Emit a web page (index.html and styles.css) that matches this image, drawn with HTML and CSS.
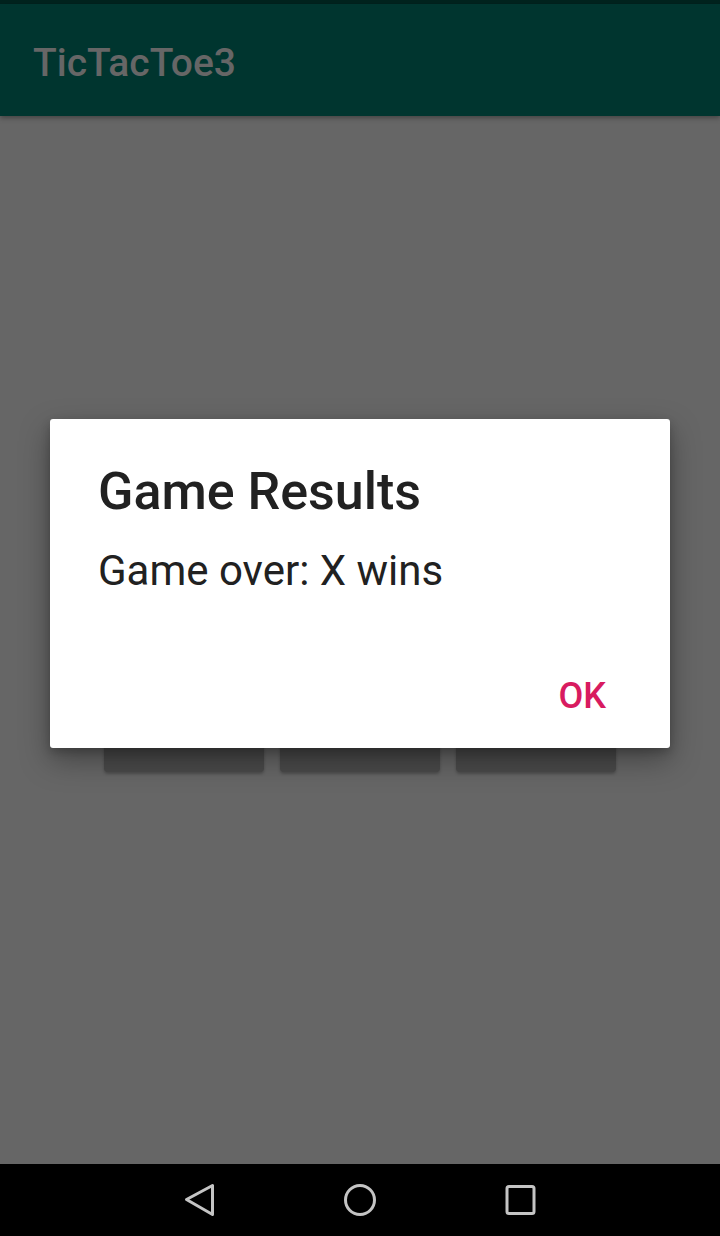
FILE: index.html
```html
<!DOCTYPE html>
<html>
<head>
<meta charset="utf-8">
<link rel="stylesheet" href="styles.css">
</head>
<body>
<div class="screen">
  <div class="statusbar"></div>
  <header class="appbar"><span class="app-title">TicTacToe3</span></header>
  <main class="content">
    <div class="board">
      <div class="cell"></div><div class="cell"></div><div class="cell"></div>
      <div class="cell"></div><div class="cell"></div><div class="cell"></div>
      <div class="cell"></div><div class="cell"></div><div class="cell"></div>
    </div>
    <div class="dialog">
      <h1 class="dialog-title">Game Results</h1>
      <p class="dialog-msg">Game over: X wins</p>
      <div class="dialog-actions"><span class="btn-ok">OK</span></div>
    </div>
  </main>
  <nav class="navbar">
    <svg class="nav-icon" width="40" height="40" viewBox="0 0 40 40"><path d="M6.5 19.5 L32.5 5.5 L32.5 34.5 Z" fill="none" stroke="#c4c4c4" stroke-width="3" stroke-linejoin="round"/></svg>
    <svg class="nav-icon" width="40" height="40" viewBox="0 0 40 40"><circle cx="20" cy="20" r="14.5" fill="none" stroke="#c4c4c4" stroke-width="3"/></svg>
    <svg class="nav-icon" width="40" height="40" viewBox="0 0 40 40"><rect x="7" y="6.5" width="27" height="27" rx="2" fill="none" stroke="#c4c4c4" stroke-width="3"/></svg>
  </nav>
</div>
</body>
</html>
```
FILE: styles.css
```css
html, body {
  margin: 0;
  padding: 0;
  background: #666666;
}
.screen {
  width: 720px;
  height: 1236px;
  display: flex;
  flex-direction: column;
  font-family: Roboto, "Noto Sans", sans-serif;
  overflow: hidden;
}
.statusbar {
  height: 4px;
  background: #00231e;
  flex: none;
}
.appbar {
  height: 112px;
  flex: none;
  background: #00352f;
  display: flex;
  align-items: center;
  padding-left: 33px;
  box-shadow: 0 2px 5px rgba(0,0,0,0.35);
  position: relative;
  z-index: 1;
}
.app-title {
  color: #666666;
  font-size: 39px;
  font-weight: 500;
  margin-top: 6px;
}
.content {
  flex: 1;
  position: relative;
  background: #666666;
  padding-top: 392px;
}
.board {
  width: 512px;
  margin: 0 auto;
  display: grid;
  grid-template-columns: 160px 160px 160px;
  grid-auto-rows: 80px;
  column-gap: 16px;
  row-gap: 12px;
}
.cell {
  background: #4a4a4a;
  border-radius: 4px;
  box-shadow: 0 2px 3px rgba(0,0,0,0.25);
}
.dialog {
  position: absolute;
  left: 50px;
  top: 303px;
  width: 620px;
  height: 329px;
  box-sizing: border-box;
  background: #ffffff;
  border-radius: 3px;
  box-shadow: 0 12px 30px rgba(0,0,0,0.35), 0 4px 10px rgba(0,0,0,0.2);
  padding: 0 48px;
  display: flex;
  flex-direction: column;
}
.dialog-title {
  margin: 0;
  margin-top: 40px;
  font-size: 52px;
  font-weight: 500;
  color: #212121;
  line-height: 66px;
}
.dialog-msg {
  margin: 0;
  margin-top: 20px;
  font-size: 42px;
  color: #212121;
  line-height: 52px;
}
.dialog-actions {
  margin-top: auto;
  margin-bottom: 32px;
  display: flex;
  justify-content: flex-end;
  margin-right: 16px;
}
.btn-ok {
  color: #d81b60;
  font-size: 36px;
  font-weight: 500;
  line-height: 40px;
}
.navbar {
  height: 72px;
  flex: none;
  background: #000000;
  display: flex;
  justify-content: center;
  align-items: center;
  gap: 120px;
}
.nav-icon {
  display: block;
}
```
